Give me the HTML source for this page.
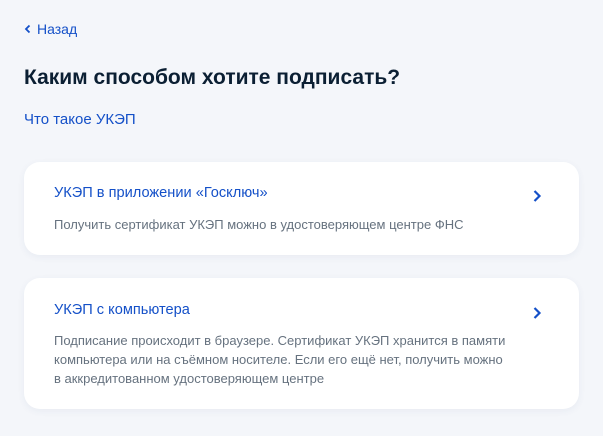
<!DOCTYPE html>
<html><head><meta charset="utf-8"><style>
*{margin:0;padding:0;box-sizing:border-box}
body{width:603px;height:436px;background:#f4f6fa;font-family:"Liberation Sans","DejaVu Sans",sans-serif;position:relative;overflow:hidden}
.a{position:absolute;white-space:nowrap}
.blue{color:#1450c8}
.card{position:absolute;left:24px;width:555px;background:#fff;border-radius:16px;box-shadow:0 2px 8px rgba(40,60,120,.06)}
.t{position:absolute;left:30px;font-size:14.6px;color:#1450c8}
.d{position:absolute;left:30px;font-size:13px;color:#66727f;line-height:19px;white-space:nowrap}
.ch{position:absolute;left:508px}
</style></head><body>
<div class="a blue" style="left:24px;top:21px;font-size:14px">
<svg width="8" height="10" viewBox="0 0 8 10" style="margin-right:5px;vertical-align:0"><path d="M5.5 1.5L2 5l3.5 3.5" stroke="#1450c8" stroke-width="1.8" fill="none"/></svg>Назад</div>
<div class="a" style="left:24px;top:66px;font-size:21px;font-weight:bold;color:#0b1f33">Каким способом хотите подписать?</div>
<div class="a blue" style="left:24px;top:111px;font-size:15px">Что такое УКЭП</div>
<div class="card" style="top:162px;height:93px">
<div class="t" style="top:23px">УКЭП в приложении «Госключ»</div>
<div class="d" style="top:53px">Получить сертификат УКЭП можно в удостоверяющем центре ФНС</div>
<svg class="ch" style="top:27px" width="10" height="14" viewBox="0 0 10 14"><path d="M2.5 2l5 5-5 5" stroke="#1450c8" stroke-width="2.2" fill="none"/></svg>
</div>
<div class="card" style="top:278px;height:131px">
<div class="t" style="top:24px">УКЭП с компьютера</div>
<div class="d" style="top:53px">Подписание происходит в браузере. Сертификат УКЭП хранится в памяти<br>компьютера или на съёмном носителе. Если его ещё нет, получить можно<br>в аккредитованном удостоверяющем центре</div>
<svg class="ch" style="top:28px" width="10" height="14" viewBox="0 0 10 14"><path d="M2.5 2l5 5-5 5" stroke="#1450c8" stroke-width="2.2" fill="none"/></svg>
</div>
</body></html>
